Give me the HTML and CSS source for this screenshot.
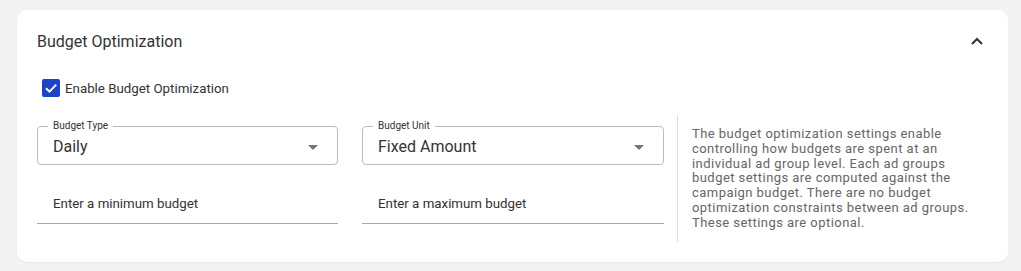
FILE: index.html
```html
<!DOCTYPE html>
<html lang="en">
<head>
    <meta charset="UTF-8">
    <title>Budget Optimization</title>
    <link rel="stylesheet" href="styles.css">
</head>
<body>
    <div class="card">
        <!-- Accordion header -->
        <div class="card-header">
            <span class="card-title">Budget Optimization</span>
            <svg class="chevron" width="12" height="8" viewBox="0 0 12 8">
                <path d="M1 7 L6 2 L11 7" fill="none" stroke="#333" stroke-width="2"/>
            </svg>
        </div>

        <div class="card-body">
            <label class="check-row">
                <span class="checkbox">
                    <svg width="18" height="18" viewBox="0 0 18 18">
                        <path d="M4 9.2 L7.5 12.6 L14.2 5.6" fill="none" stroke="#fff" stroke-width="2"/>
                    </svg>
                </span>
                <span class="check-label">Enable Budget Optimization</span>
            </label>

            <div class="settings">
                <div class="fields">
                    <div class="select">
                        <span class="select-label">Budget Type</span>
                        <span class="select-value">Daily</span>
                        <span class="arrow"></span>
                    </div>
                    <div class="select">
                        <span class="select-label">Budget Unit</span>
                        <span class="select-value">Fixed Amount</span>
                        <span class="arrow"></span>
                    </div>
                    <div class="input">Enter a minimum budget</div>
                    <div class="input">Enter a maximum budget</div>
                </div>
                <div class="description">
                    The budget optimization settings enable controlling how budgets are spent at an individual ad group level. Each ad groups budget settings are computed against the campaign budget. There are no budget optimization constraints between ad groups. These settings are optional.
                </div>
            </div>
        </div>
    </div>
</body>
</html>
```

FILE: styles.css
```css
body {
    font-family: Roboto, "Liberation Sans", sans-serif;
    background-color: #f3f3f3;
    color: #333;
    margin: 0;
    padding: 10px 13px 9px 17px;
}
.card {
    background-color: white;
    border-radius: 10px;
    box-shadow: 0 1px 2px rgba(0, 0, 0, 0.06);
    height: 252px;
    box-sizing: border-box;
}
.card-header {
    display: flex;
    align-items: center;
    justify-content: space-between;
    height: 62px;
    padding: 0 25px 0 20px;
}
.card-title {
    font-size: 16px;
    color: #333;
}
.card-body {
    padding: 0 20px;
}
.check-row {
    display: flex;
    align-items: center;
    margin: 3px 0 0 5px;
    height: 26px;
}
.checkbox {
    width: 18px;
    height: 18px;
    border-radius: 2px;
    background-color: #1d44c8;
    display: flex;
}
.check-label {
    font-size: 13.3px;
    margin-left: 5px;
    color: #333;
}
.settings {
    display: flex;
    margin-top: 14px;
}
.fields {
    display: grid;
    grid-template-columns: 301px 302px;
    column-gap: 24px;
    row-gap: 18px;
    align-content: start;
    padding-top: 11px;
}
.select {
    position: relative;
    height: 39px;
    border: 1px solid #bbb;
    border-radius: 4px;
    box-sizing: border-box;
    display: flex;
    align-items: center;
    padding: 0 15px;
}
.select-label {
    position: absolute;
    top: -7px;
    left: 10px;
    padding: 0 5px;
    background-color: white;
    font-size: 10px;
    line-height: 12px;
    color: #333;
}
.select-value {
    font-size: 16px;
    color: #333;
    margin-top: 1px;
}
.arrow {
    position: absolute;
    right: 19px;
    top: 18px;
    border-left: 5px solid transparent;
    border-right: 5px solid transparent;
    border-top: 5px solid #757575;
}
.input {
    height: 40px;
    border-bottom: 1px solid #aaa;
    display: flex;
    align-items: center;
    padding: 0 16px;
    font-size: 13.3px;
    color: #333;
}
.description {
    margin-left: 13px;
    border-left: 1px solid #ddd;
    padding: 12px 0 11px 14px;
    width: 296px;
    font-size: 13px;
    line-height: 14.8px;
    letter-spacing: 0.45px;
    color: #666;
}
```
